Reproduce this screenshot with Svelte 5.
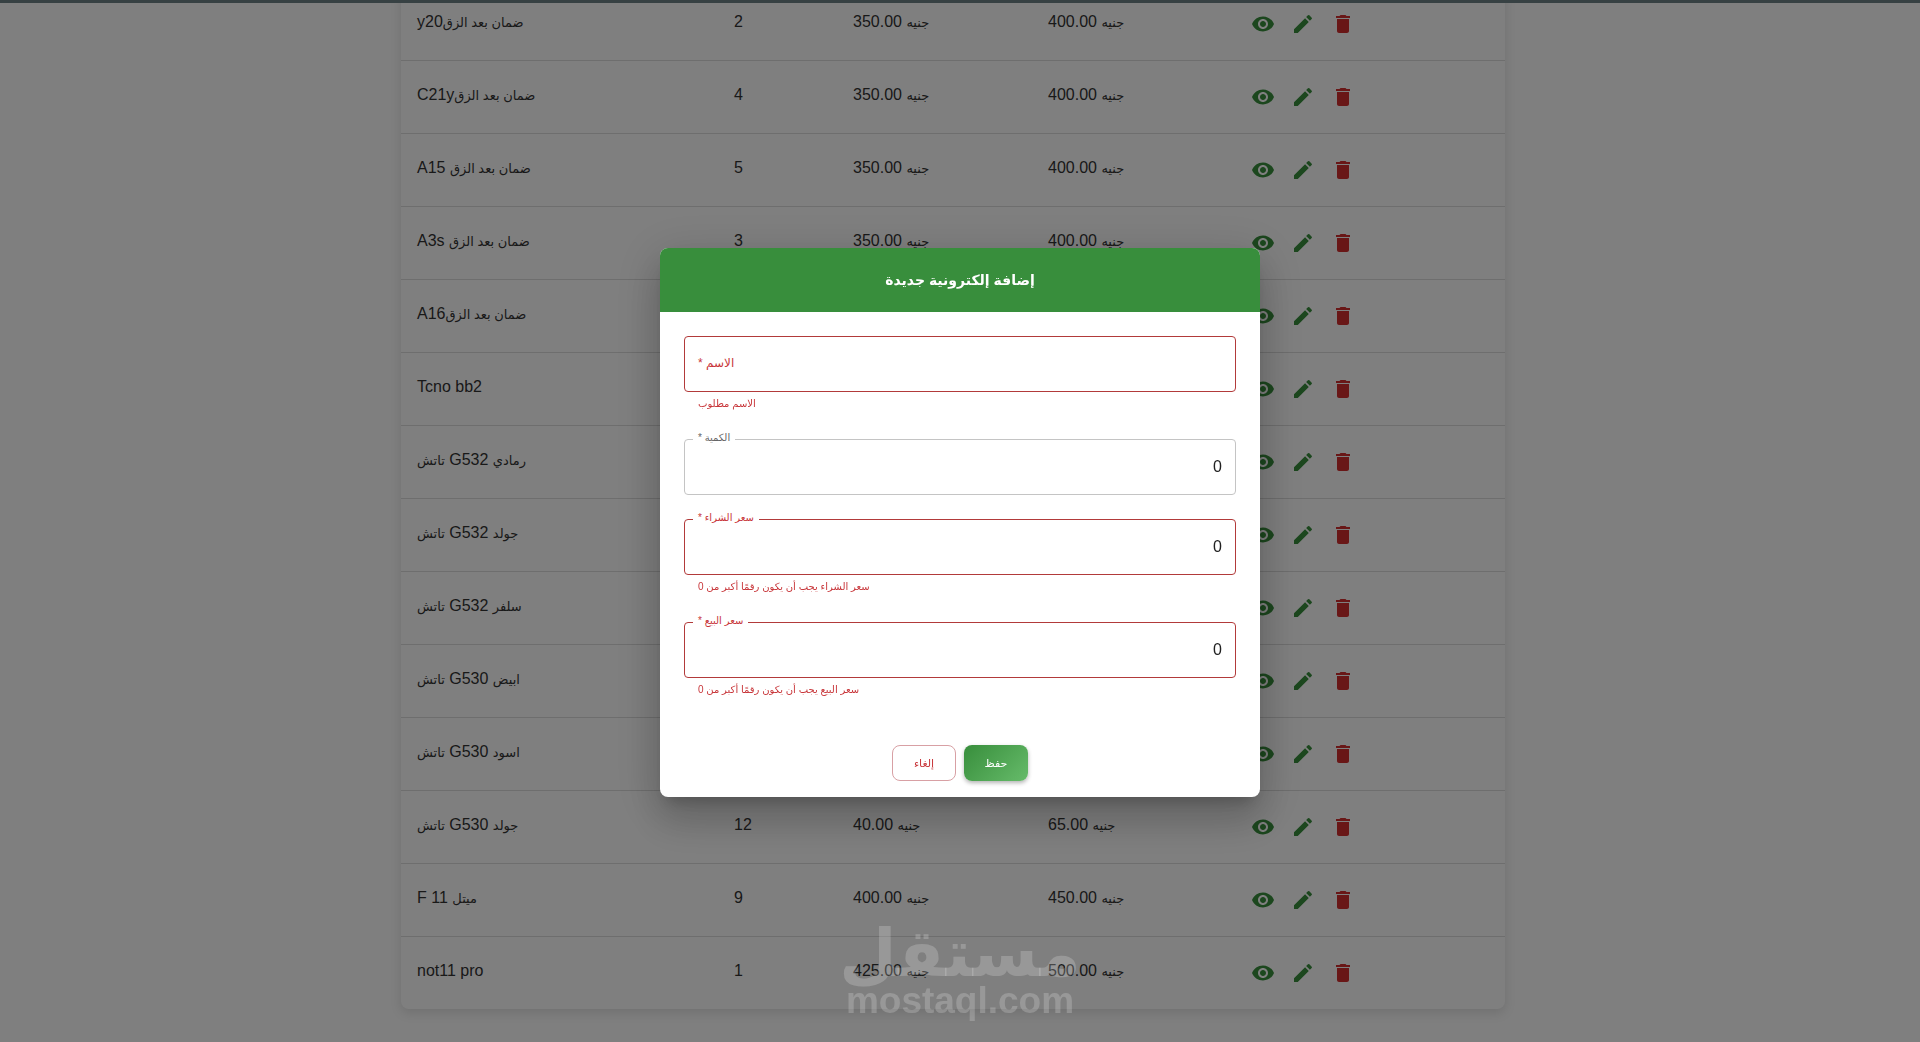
<script lang="ts">
	interface Item {
		name: string;
		quantity: number;
		buy: number;
		sell: number;
	}

	interface Field {
		id: string;
		label: string;
		type: 'text' | 'number';
		value: string;
		error?: string;
	}

	const items: Item[] = [
		{ name: 'y20ضمان بعد الزق', quantity: 2, buy: 350, sell: 400 },
		{ name: 'C21yضمان بعد الزق', quantity: 4, buy: 350, sell: 400 },
		{ name: 'A15 ضمان بعد الزق', quantity: 5, buy: 350, sell: 400 },
		{ name: 'A3s ضمان بعد الزق', quantity: 3, buy: 350, sell: 400 },
		{ name: 'A16ضمان بعد الزق', quantity: 3, buy: 350, sell: 400 },
		{ name: 'Tcno bb2', quantity: 2, buy: 350, sell: 400 },
		{ name: 'تاتش G532 رمادي', quantity: 4, buy: 40, sell: 65 },
		{ name: 'تاتش G532 جولد', quantity: 6, buy: 40, sell: 65 },
		{ name: 'تاتش G532 سلفر', quantity: 5, buy: 40, sell: 65 },
		{ name: 'تاتش G530 ابيض', quantity: 8, buy: 40, sell: 65 },
		{ name: 'تاتش G530 اسود', quantity: 7, buy: 40, sell: 65 },
		{ name: 'تاتش G530 جولد', quantity: 12, buy: 40, sell: 65 },
		{ name: 'F 11 ميتل', quantity: 9, buy: 400, sell: 450 },
		{ name: 'not11 pro', quantity: 1, buy: 425, sell: 500 }
	];

	let fields: Field[] = $state([
		{ id: 'name', label: 'الاسم', type: 'text', value: '', error: 'الاسم مطلوب' },
		{ id: 'quantity', label: 'الكمية', type: 'number', value: '0' },
		{ id: 'buy', label: 'سعر الشراء', type: 'number', value: '0', error: 'سعر الشراء يجب أن يكون رقمًا أكبر من 0' },
		{ id: 'sell', label: 'سعر البيع', type: 'number', value: '0', error: 'سعر البيع يجب أن يكون رقمًا أكبر من 0' }
	]);

	let open = $state(true);
</script>

{#snippet price(amount: number)}
	{amount.toFixed(2)} <span class="ar">جنيه</span>
{/snippet}

<div class="page">
	<header class="app-bar"></header>

	<main>
		<table>
			<tbody>
				{#each items as item (item.name)}
					<tr>
						<td class="name">
							{#each item.name.split(/([\u0600-\u06ff]+(?: [\u0600-\u06ff]+)*)/) as part, i (i)}{#if i % 2}<span class="ar">{part}</span>{:else}{part}{/if}{/each}
						</td>
						<td class="quantity">{item.quantity}</td>
						<td class="price">{@render price(item.buy)}</td>
						<td class="price">{@render price(item.sell)}</td>
						<td>
							<div class="actions">
								<button class="icon-button" aria-label="عرض">
									<svg viewBox="0 0 24 24"><path d="M12 4.5C7 4.5 2.73 7.61 1 12c1.73 4.39 6 7.5 11 7.5s9.27-3.11 11-7.5c-1.73-4.39-6-7.5-11-7.5M12 17c-2.76 0-5-2.24-5-5s2.24-5 5-5 5 2.24 5 5-2.24 5-5 5m0-8c-1.66 0-3 1.34-3 3s1.34 3 3 3 3-1.34 3-3-1.34-3-3-3" /></svg>
								</button>
								<button class="icon-button" aria-label="تعديل">
									<svg viewBox="0 0 24 24"><path d="M3 17.25V21h3.75L17.81 9.94l-3.75-3.75zM20.71 7.04c.39-.39.39-1.02 0-1.41l-2.34-2.34a.996.996 0 0 0-1.41 0l-1.83 1.83 3.75 3.75z" /></svg>
								</button>
								<button class="icon-button danger" aria-label="حذف">
									<svg viewBox="0 0 24 24"><path d="M6 19c0 1.1.9 2 2 2h8c1.1 0 2-.9 2-2V7H6zM19 4h-3.5l-1-1h-5l-1 1H5v2h14z" /></svg>
								</button>
							</div>
						</td>
					</tr>
				{/each}
			</tbody>
		</table>
	</main>
</div>

{#if open}
	<div class="backdrop">
		<div class="dialog" role="dialog" aria-modal="true" aria-labelledby="dialog-title">
			<h2 id="dialog-title" dir="rtl">إضافة إلكترونية جديدة</h2>
			<form id="item-form">
				{#each fields as field (field.id)}
					<div class="field" class:error={field.error}>
						<div class="control">
							<input id={field.id} type={field.type} bind:value={field.value} />
							<label for={field.id} class:shrink={field.value !== ''} dir="rtl">{field.label} *</label>
						</div>
						{#if field.error}
							<p class="helper" dir="rtl">{field.error}</p>
						{/if}
					</div>
				{/each}
			</form>
			<div class="dialog-actions">
				<button class="cancel" onclick={() => (open = false)}>إلغاء</button>
				<button class="save" form="item-form">حفظ</button>
			</div>
		</div>
	</div>
{/if}

<div class="watermark">
	<span class="brand">مستقل</span>
	<span class="site">mostaql.com</span>
</div>

<style>
	:global(body) {
		margin: 0;
		font-family: 'Liberation Sans', 'DejaVu Sans', sans-serif;
		font-size: 16px;
		color: #212121;
	}

	.page {
		display: flex;
		flex-direction: column;
		height: 100vh;
		overflow: hidden;
		background: #fefefe;
	}

	.app-bar {
		flex: none;
		height: 3px;
		background: #6e8286;
		position: relative;
		z-index: 1;
	}

	main {
		flex: 1;
		min-height: 0;
		display: flex;
		flex-direction: column;
		justify-content: flex-end;
		align-items: center;
		padding: 0 14px 33px 0;
		overflow: hidden;
	}

	table {
		width: 100%;
		max-width: 1104px;
		table-layout: fixed;
		border-collapse: separate;
		border-spacing: 0;
		background: #fff;
		border-radius: 8px;
		box-shadow: 0 4px 12px rgba(0, 0, 0, 0.12);
		color: #333;
	}

	td {
		box-sizing: border-box;
		height: 73px;
		padding: 0 16px 4px;
		border-bottom: 1px solid #dcdcdc;
		white-space: nowrap;
	}

	tr:last-child td {
		height: 72px;
		border-bottom: none;
	}

	.name {
		width: 317px;
	}

	.quantity {
		width: 119px;
	}

	.price {
		width: 195px;
	}

	.ar {
		font-size: 13px;
	}

	.actions {
		display: flex;
		padding-top: 4px;
	}

	.icon-button {
		display: flex;
		padding: 8px;
		border: none;
		border-radius: 50%;
		background: transparent;
		color: #388e3c;
		cursor: pointer;
	}

	.icon-button.danger {
		color: #d32f2f;
	}

	.icon-button svg {
		width: 24px;
		height: 24px;
		fill: currentColor;
	}

	.backdrop {
		position: fixed;
		inset: 0;
		z-index: 10;
		display: flex;
		align-items: center;
		justify-content: center;
		padding-top: 3px;
		background: rgba(0, 0, 0, 0.5);
	}

	.dialog {
		width: 600px;
		border-radius: 8px;
		overflow: hidden;
		background: #fff;
		box-shadow:
			0 11px 15px -7px rgba(0, 0, 0, 0.2),
			0 24px 38px 3px rgba(0, 0, 0, 0.14),
			0 9px 46px 8px rgba(0, 0, 0, 0.12);
	}

	h2 {
		margin: 0;
		background: #388e3c;
		color: #fff;
		font-size: 14px;
		font-weight: 700;
		line-height: 64px;
		text-align: center;
	}

	form {
		display: flex;
		flex-direction: column;
		gap: 24px;
		padding: 24px;
	}

	.control {
		position: relative;
	}

	input {
		display: block;
		box-sizing: border-box;
		width: 100%;
		height: 56px;
		padding: 0 13px;
		border: 1px solid #c4c4c4;
		border-radius: 4px;
		background: transparent;
		font: inherit;
		color: inherit;
		text-align: right;
		outline: none;
		appearance: textfield;
	}

	input::-webkit-inner-spin-button {
		display: none;
	}

	label {
		position: absolute;
		top: 16px;
		left: 9px;
		padding: 0 5px;
		background: #fff;
		color: #666;
		font-size: 12px;
		line-height: 22px;
	}

	label.shrink {
		top: -12px;
		font-size: 10px;
	}

	.error input {
		border-color: #b23a3a;
	}

	.error label,
	.helper {
		color: #c8363a;
	}

	.helper {
		margin: 2px 14px 1px;
		font-size: 10px;
		line-height: 20px;
		text-align: left;
	}

	.dialog-actions {
		display: flex;
		justify-content: center;
		gap: 8px;
		padding: 20px 16px 16px;
	}

	.dialog-actions button {
		width: 64px;
		height: 36px;
		padding: 0;
		border-radius: 8px;
		font-family: inherit;
		font-size: 11px;
		cursor: pointer;
	}

	.cancel {
		border: 1px solid #d8a0a4;
		background: #fff;
		color: #c8363a;
	}

	.save {
		border: none;
		background: linear-gradient(135deg, #388e3c, #66bb6a);
		box-shadow: 0 2px 4px rgba(0, 0, 0, 0.3);
		color: #fff;
	}

	.watermark {
		position: fixed;
		inset: auto 0 20px;
		z-index: 20;
		display: flex;
		flex-direction: column;
		align-items: center;
		color: rgba(255, 255, 255, 0.2);
		font-weight: 700;
		pointer-events: none;
	}

	.brand {
		font-size: 66px;
		line-height: 54px;
	}

	.site {
		font-size: 37px;
		line-height: 42px;
	}
</style>
